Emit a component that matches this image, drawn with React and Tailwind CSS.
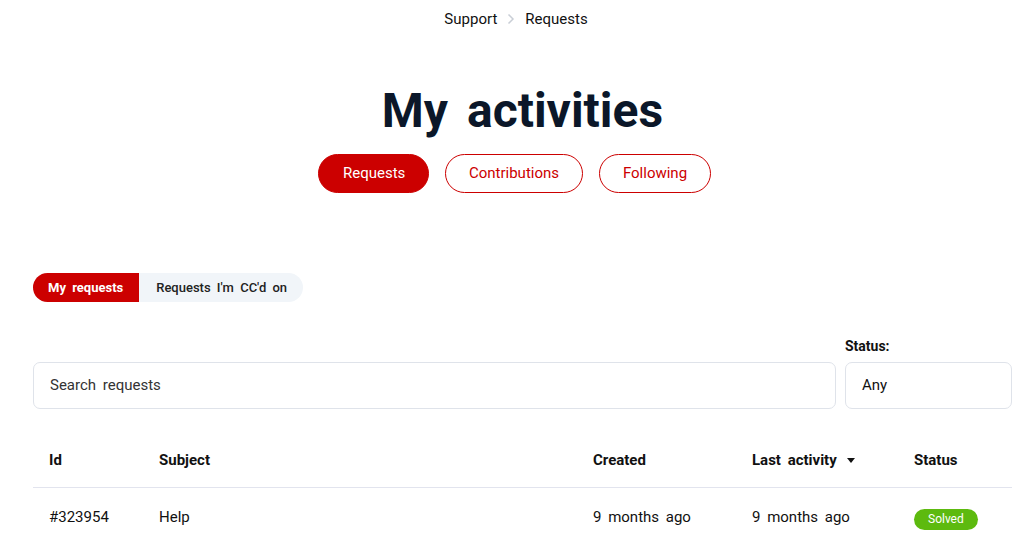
import React from "react";

const COLS = [
  { label: "Id", w: "w-[110px]" },
  { label: "Subject", w: "w-[434px]" },
  { label: "Created", w: "w-[159px]" },
  { label: "Last activity", w: "w-[162px]", sort: true },
  { label: "Status", w: "flex-1" },
];

export default function App() {
  return (
    <div className="min-h-screen bg-white text-[#111] font-['Roboto',sans-serif] [word-spacing:3px]">
      {/* breadcrumb */}
      <nav className="flex justify-center items-center gap-[10px] pt-[9px] pl-[12px] text-[15px] leading-[20px]">
        <span>Support</span>
        <svg width="8" height="12" viewBox="0 0 8 12" className="text-[#c9ced6]">
          <path d="M1.5 1.5 6 6l-4.5 4.5" fill="none" stroke="currentColor" strokeWidth="1.5" />
        </svg>
        <span>Requests</span>
      </nav>

      <h1 className="text-center text-[48px] leading-[56px] font-bold text-[#0b1729] mt-[54px] pl-[25px] [word-spacing:7px]">
        My activities
      </h1>

      <div className="flex justify-center gap-[16px] mt-[15px] pl-[9px] text-[15px]">
        <button className="h-[39px] px-[24px] rounded-full bg-[#cc0000] text-white border border-[#cc0000] w-[111px]">Requests</button>
        <button className="h-[39px] rounded-full border border-[#cc0000] text-[#cc0000] w-[138px]">Contributions</button>
        <button className="h-[39px] rounded-full border border-[#cc0000] text-[#cc0000] w-[112px]">Following</button>
      </div>

      <div className="pl-[33px] pr-[8px]">
        <div className="mt-[80px] inline-flex rounded-full overflow-hidden bg-[#f1f5f9] text-[13px] h-[29px] items-center whitespace-nowrap [word-spacing:3px]">
          <span className="h-full flex items-center bg-[#cc0000] text-white font-bold pl-[15px] pr-[16px]">My requests</span>
          <span className="h-full flex items-center font-medium text-[#222] pl-[17px] pr-[16px]">Requests I'm CC'd on</span>
        </div>

        <div className="flex gap-[9px] mt-[37px]">
          <div className="flex-1 flex flex-col justify-end">
            <div className="h-[47px] border border-[#dfe3ea] rounded-[7px] flex items-center pl-[16px] text-[15px] text-[#333]">
              Search requests
            </div>
          </div>
          <div className="w-[167px]">
            <div className="text-[14px] font-bold leading-[16px] mb-[8px] -mt-[1px]">Status:</div>
            <div className="h-[47px] border border-[#dfe3ea] rounded-[7px] flex items-center pl-[16px] text-[15px]">
              Any
            </div>
          </div>
        </div>

        <div className="mt-[24px] text-[15px]">
          <div className="flex h-[55px] items-center border-b border-[#e2e4ee] font-bold">
            {COLS.map((c) => (
              <div key={c.label} className={`${c.w} px-[16px] flex items-center gap-[10px]`}>
                {c.label}
                {c.sort && (
                  <svg width="8" height="5" viewBox="0 0 8 5">
                    <path d="M0 0h8L4 5z" fill="#111" />
                  </svg>
                )}
              </div>
            ))}
          </div>
          <div className="flex h-[58px] items-center">
            <div className="w-[110px] px-[16px]">#323954</div>
            <div className="w-[434px] px-[16px]">Help</div>
            <div className="w-[159px] px-[16px]">9 months ago</div>
            <div className="w-[162px] px-[16px]">9 months ago</div>
            <div className="flex-1 px-[16px] flex">
              <span className="mt-[4px] h-[21px] px-[14px] rounded-full bg-[#5dba0f] text-white text-[12px] flex items-center [word-spacing:0]">Solved</span>
            </div>
          </div>
        </div>
      </div>
    </div>
  );
}
